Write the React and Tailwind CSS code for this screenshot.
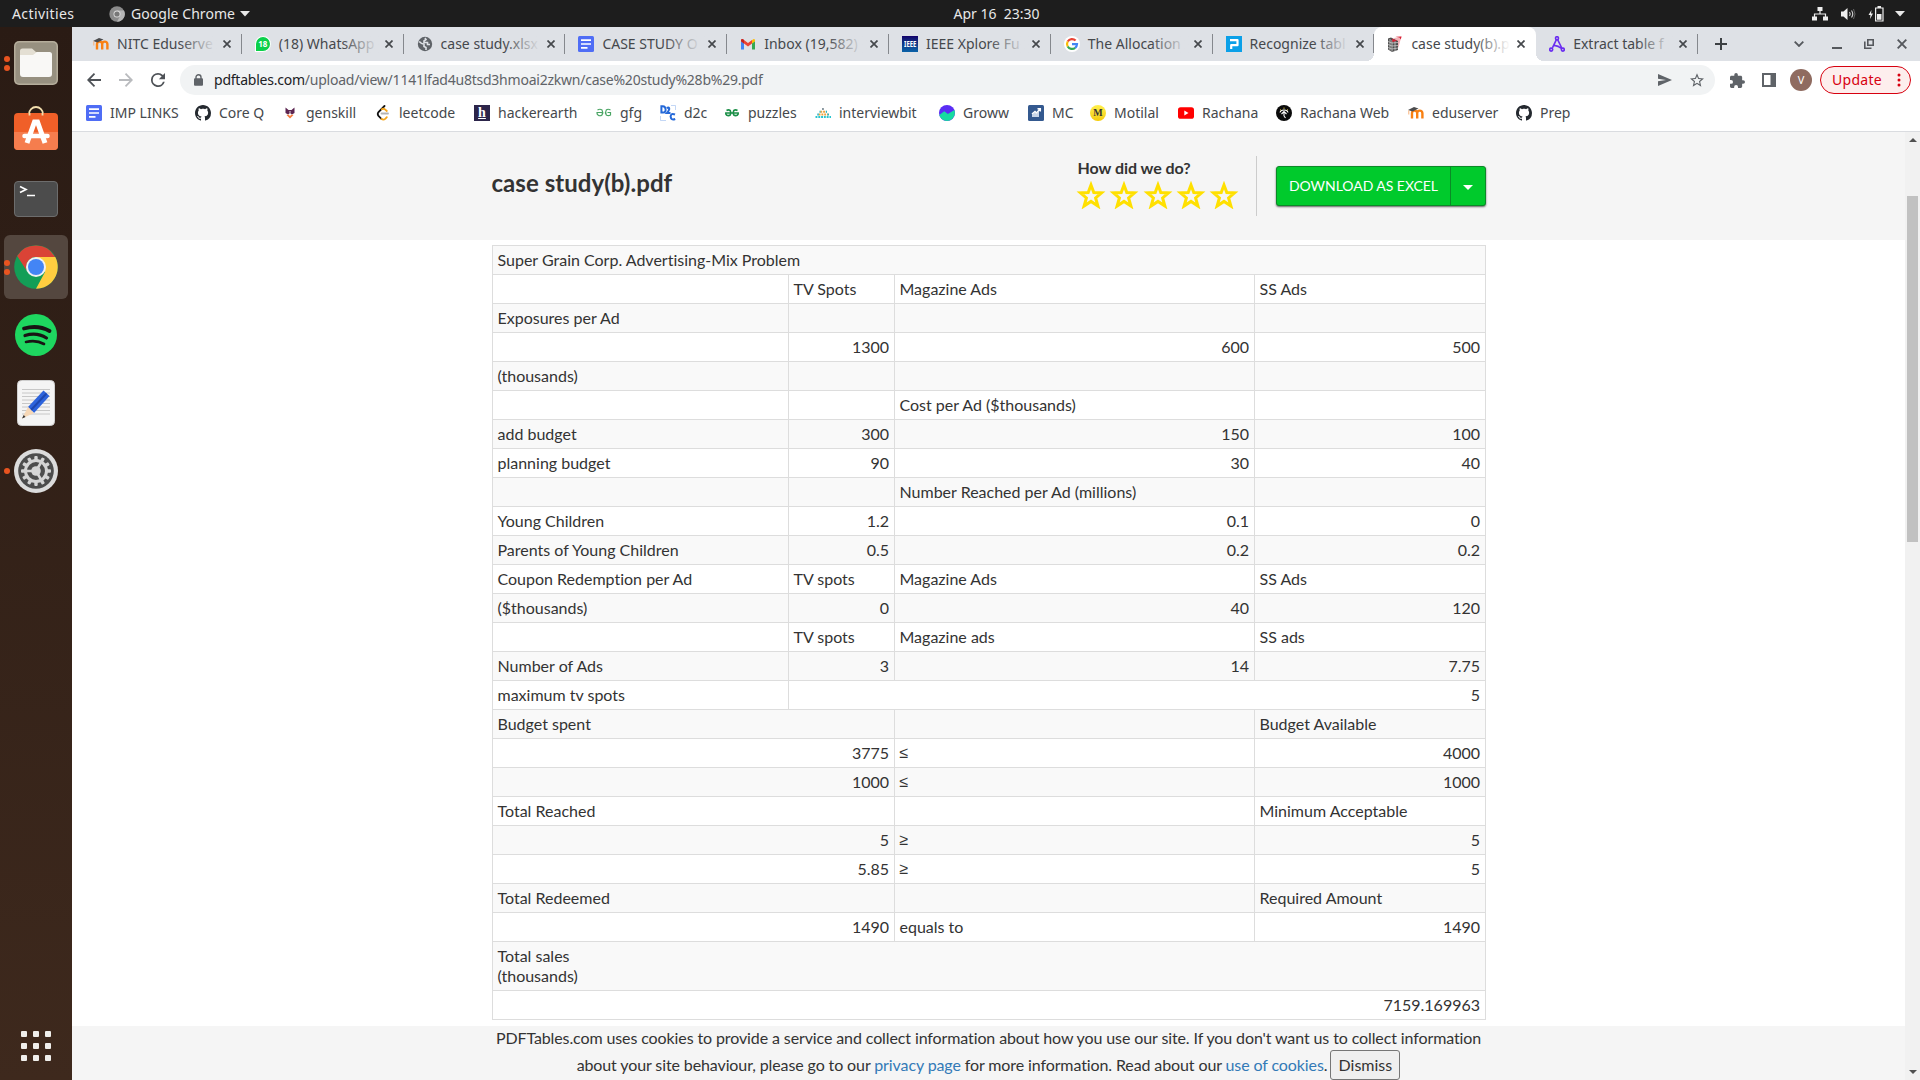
import React from "react";

const UI = "font-['Noto_Sans',sans-serif]";

function Globe() {
  return (
    <svg viewBox="0 0 16 16" className="h-4 w-4">
      <circle cx="8" cy="8" r="7.2" fill="#5f6368" />
      <path d="M2.2 5.5Q4.500 8 7 8.200V10.500L9 11.500V14M8 2L9 3.500L7 5V6.500H10.500V8.500H13" stroke="#dee1e6" strokeWidth="1.600" fill="none" />
    </svg>
  );
}

function Moodle() {
  return (
    <svg viewBox="0 0 16 16" className="h-4 w-4">
      <path d="M4 13.5V8.2a2.6 2.6 0 0 1 5.2 0v5.3M9.2 8.2a2.6 2.6 0 0 1 5.2 0v5.3" fill="none" stroke="#f98012" strokeWidth="2.4" />
      <path d="M0 5 L6 2 L10.5 3.6 L4.5 6.6 Z" fill="#4b4b4d" />
      <path d="M.8 5.4V9.5" stroke="#f9b27a" strokeWidth="1" />
    </svg>
  );
}

function Docs() {
  return (
    <svg viewBox="0 0 16 16" className="h-4 w-4">
      <rect width="16" height="16" rx="1.5" fill="#4f6df5" />
      <path d="M3 4.2H13M3 8H13M3 11.8H9.5" stroke="#fff" strokeWidth="1.7" />
    </svg>
  );
}

function Whatsapp() {
  return (
    <div className="flex h-4 w-4 items-center justify-center rounded-full rounded-bl-sm border border-white bg-[#0bd04a]">
      <span className="text-[8px] leading-none font-bold text-white">18</span>
    </div>
  );
}

function Gmail() {
  return (
    <svg viewBox="0 0 16 16" className="h-4 w-4">
      <path d="M1 4.5V13.5H4V7.3L1 5Z" fill="#4285f4" />
      <path d="M12 7.3V13.5H15V5Z" fill="#34a853" />
      <path d="M12 4.2L13.2 3.2Q15 2.2 15 4.5V5.2L12 7.5Z" fill="#fbbc04" />
      <path d="M1 5.2V4.5Q1 2.2 3 3.2L8 7L12 4.1V7.5L8 10.600 4 7.500Z" fill="#ea4335" />
      <path d="M1 5.2V4.5Q1 2.2 3 3.2L4 4V7.5Z" fill="#c5221f" />
    </svg>
  );
}

function Ieee() {
  return (
    <div className="flex h-4 w-4 items-center justify-center bg-gradient-to-b from-[#14006b] to-[#0a63a8]">
      <span className="scale-x-75 text-[8px] leading-none font-bold text-white">IEEE</span>
    </div>
  );
}

function Google() {
  return (
    <svg viewBox="0 0 16 16" className="h-4 w-4">
      <circle cx="8" cy="8" r="8" fill="#fff" />
      <g fill="none" strokeWidth="2.2">
        <path d="M11.6 4.6A5 5 0 0 0 3.7 5.5" stroke="#ea4335" />
        <path d="M3.7 5.5A5 5 0 0 0 3.7 10.5" stroke="#fbbc05" />
        <path d="M3.7 10.5A5 5 0 0 0 11.2 11.8" stroke="#34a853" />
        <path d="M11.2 11.8A5 5 0 0 0 13 8.2H8" stroke="#4285f4" />
      </g>
    </svg>
  );
}

function Pdfel() {
  return (
    <svg viewBox="0 0 16 16" className="h-4 w-4">
      <rect width="16" height="16" fill="#0ba0e8" />
      <path d="M4 4.2H11.5V9.2H5.2V13" fill="none" stroke="#fff" strokeWidth="2.2" strokeLinejoin="round" />
    </svg>
  );
}

function PdfTables() {
  return (
    <svg viewBox="0 0 16 16" className="h-4 w-4">
      <path d="M7 2L14.500 .5L11.500 11L10 13Z" fill="#f3b3b8" />
      <path d="M1 2.500L4 1.500L11 5V14L5 16L1 13.500Z" fill="#4f4f4f" />
      <path d="M1 5.500L5 7L11 6.500M1 8.500L5 10L11 9.500M1 11.500L5 13L11 12M3 3V14.500M5 4V15.500M8 5V15" stroke="#d5d5d5" strokeWidth=".7" fill="none" />
      <path d="M5 2.500L10 4.800L5.500 6ZM8.500 .8L14.500 .5L13.800 3.500L12.500 1.600Z" fill="#d81f33" />
    </svg>
  );
}

function Nodes() {
  return (
    <svg viewBox="0 0 16 16" className="h-4 w-4">
      <g fill="none" stroke="#6a2df0" strokeWidth="1.6">
        <circle cx="8" cy="2.2" r="1.5" />
        <circle cx="2.2" cy="13.6" r="1.5" />
        <circle cx="13.8" cy="13.6" r="1.5" />
        <path d="M7.4 3.7L3.4 11.8M8.6 3.7L12.8 12M5 9.8C7.5 9 10 10.5 12.5 12.5" />
      </g>
    </svg>
  );
}

function Github() {
  return (
    <svg viewBox="0 0 16 16" className="h-4 w-4">
      <path fill="#24292f" d="M8 0C3.58 0 0 3.58 0 8c0 3.54 2.29 6.53 5.47 7.59.4.07.55-.17.55-.38 0-.19-.01-.82-.01-1.49-2.01.37-2.53-.49-2.69-.94-.09-.23-.48-.94-.82-1.13-.28-.15-.68-.52-.01-.53.63-.01 1.08.58 1.23.82.72 1.21 1.87.87 2.33.66.07-.52.28-.87.51-1.07-1.78-.2-3.64-.89-3.64-3.95 0-.87.31-1.59.82-2.15-.08-.2-.36-1.02.08-2.12 0 0 .67-.21 2.2.82.64-.18 1.32-.27 2-.27s1.36.09 2 .27c1.53-1.04 2.2-.82 2.2-.82.44 1.1.16 1.92.08 2.12.51.56.82 1.27.82 2.15 0 3.07-1.87 3.75-3.65 3.95.29.25.54.73.54 1.48 0 1.07-.01 1.93-.01 2.2 0 .21.15.46.55.38A8.01 8.01 0 0 0 16 8c0-4.42-3.58-8-8-8z" />
    </svg>
  );
}

function Genskill() {
  return (
    <svg viewBox="0 0 16 16" className="h-4 w-4">
      <path d="M3.5 2.5L6.5 5H9.5L12.5 2.5V8L10 9.5L8 8L6 9.5L3.5 8Z" fill="#5b2450" />
      <path d="M7 6.500L8 8L9 6.500Z" fill="#fff" />
      <path d="M4.5 10L6.5 9.5L8 11L9.5 9.5L11.5 10L8 13.5Z" fill="#f47b3e" />
    </svg>
  );
}

function Leetcode() {
  return (
    <svg viewBox="0 0 16 16" className="h-4 w-4">
      <g fill="none" strokeLinecap="round" strokeWidth="1.8">
        <path d="M6.5 8.5H13" stroke="#b3b3b3" />
        <path d="M9.5 1L3.5 7.2Q2 9 3.5 10.8L6.500 14" stroke="#111" />
        <path d="M6.500 14Q8.5 15.4 10.5 13.6L11.8 12.2M6.8 4.2Q8.7 3.2 10.3 4.6L11.8 6" stroke="#f5a61d" />
      </g>
    </svg>
  );
}

function HackerEarth() {
  return (
    <div className="flex h-4 w-4 items-center justify-center bg-[#2c254a]">
      <span className="font-['Liberation_Serif',serif] text-[14px] leading-none font-bold text-white underline">h</span>
    </div>
  );
}

function Gfg() {
  return (
    <svg viewBox="0 0 16 16" className="h-4 w-4">
      <path d="M1.500 5Q4 3.500 6 5Q7.500 7.500 6 10Q4 11.500 2 10Q.800 9 1 7.500H7M14.500 5Q12 3.500 10.300 5Q8.700 7.500 10.300 10Q12.300 11.300 14.500 10V7.500H11.500" fill="none" stroke="#4aa564" strokeWidth="1.200" />
    </svg>
  );
}

function Puzzles() {
  return (
    <svg viewBox="0 0 16 16" className="h-4 w-4">
      <path d="M2.500 5.500Q4.500 4.300 6.200 5.500Q7.500 7.500 6.200 10Q4.500 11.300 2.500 10Q1.500 9 1.800 8H14.200Q14.500 9 13.500 10Q11.500 11.300 9.800 10Q8.500 7.500 9.800 5.500Q11.500 4.300 13.500 5.500" fill="none" stroke="#1b8f47" strokeWidth="1.600" />
    </svg>
  );
}

function D2c() {
  return (
    <svg viewBox="0 0 16 16" className="h-4 w-4">
      <g fill="none" stroke="#2468d8" strokeWidth="2">
        <path d="M1.4 1.2V7.5H3Q6 7.2 5.6 4.2Q5.3 1.4 2.8 1.2ZM6.8 3Q9.5 1.6 9.2 4.2Q9 6 7 8H10.5M15 9.5Q11 7.8 10.6 11.4Q11 15.8 15.2 14" />
      </g>
      <path d="M11 .5H15.5V5M.5 11V15.5H6" fill="none" stroke="#9bbcf0" strokeWidth=".6" />
    </svg>
  );
}

function InterviewBit() {
  return (
    <svg viewBox="0 0 16 16" className="h-4 w-4">
      <g fill="none" strokeWidth="2" strokeDasharray="1.9 .9">
        <path d="M7 4H9.5" stroke="#8a98a0" />
        <path d="M5.3 6.7H11.500" stroke="#f2a33c" />
        <path d="M3.600 9.4H13" stroke="#f2a33c" />
        <path d="M.5 12.100H16" stroke="#27c4cf" />
      </g>
      <path d="M2.300 9.400H3.800M12.500 9.400H14M4.500 6.700H5.600M10.800 6.700H12" stroke="#27b4c4" strokeWidth="2" />
    </svg>
  );
}

function Groww() {
  return (
    <svg viewBox="0 0 16 16" className="h-4 w-4">
      <circle cx="8" cy="8" r="8" fill="#5a2df4" />
      <path d="M0.3 10L5.3 6.3L8.8 9L15.400 5Q17 10.500 13.2 14Q8 17.8 3 14.2Q.8 12.4.3 10Z" fill="#15dba0" />
    </svg>
  );
}

function MoneyControl() {
  return (
    <svg viewBox="0 0 16 16" className="h-4 w-4">
      <rect width="16" height="16" rx="1.5" fill="#34598f" />
      <path d="M4 12V9.500L7 7L8.500 8.500L11 6V12Z" fill="#c9d6e8" />
      <path d="M4 9L7 6.5L8.5 8L12 4M9.5 3.8H12.3V6.5" fill="none" stroke="#fff" strokeWidth="1.5" />
    </svg>
  );
}

function Motilal() {
  return (
    <div className="flex h-4 w-4 items-center justify-center rounded-full bg-gradient-to-b from-[#fff04a] to-[#f5cb00]">
      <span className="font-['Liberation_Serif',serif] text-[10px] leading-none font-bold text-[#333]">M</span>
    </div>
  );
}

function Youtube() {
  return (
    <svg viewBox="0 0 16 16" className="h-4 w-4">
      <rect y="2.2" width="16" height="11.6" rx="2.6" fill="#f00" />
      <path d="M6.3 5.6L10.5 8L6.3 10.4Z" fill="#fff" />
    </svg>
  );
}

function RachanaWeb() {
  return (
    <svg viewBox="0 0 16 16" className="h-4 w-4">
      <circle cx="8" cy="8" r="8" fill="#0b0b0b" />
      <path d="M4 7.5Q4.5 5 8 5Q11.5 5 12 7.5M5.5 9L8 6.5L10.5 9M8 6.5V11M8 11L9.5 13" fill="none" stroke="#fff" strokeWidth="1.1" />
      <path d="M4 4.5L5 5.3M8 2.6V3.8M12 4.5L11 5.3" stroke="#e8d44d" strokeWidth="1" />
    </svg>
  );
}

const tabs = [
  { icon: <Moodle />, title: "NITC Eduserve" },
  { icon: <Whatsapp />, title: "(18) WhatsApp" },
  { icon: <Globe />, title: "case study.xlsx" },
  { icon: <Docs />, title: "CASE STUDY O" },
  { icon: <Gmail />, title: "Inbox (19,582)" },
  { icon: <Ieee />, title: "IEEE Xplore Fu" },
  { icon: <Google />, title: "The Allocation" },
  { icon: <Pdfel />, title: "Recognize tabl" },
  { icon: <PdfTables />, title: "case study(b).p", active: true },
  { icon: <Nodes />, title: "Extract table f" },
];

const bookmarks = [
  { icon: <Docs />, label: "IMP LINKS", w: "w-[109px]" },
  { icon: <Github />, label: "Core Q", w: "w-[87px]" },
  { icon: <Genskill />, label: "genskill", w: "w-[93px]" },
  { icon: <Leetcode />, label: "leetcode", w: "w-[99px]" },
  { icon: <HackerEarth />, label: "hackerearth", w: "w-[122px]" },
  { icon: <Gfg />, label: "gfg", w: "w-[64px]" },
  { icon: <D2c />, label: "d2c", w: "w-[64px]" },
  { icon: <Puzzles />, label: "puzzles", w: "w-[91px]" },
  { icon: <InterviewBit />, label: "interviewbit", w: "w-[124px]" },
  { icon: <Groww />, label: "Groww", w: "w-[89px]" },
  { icon: <MoneyControl />, label: "MC", w: "w-[62px]" },
  { icon: <Motilal />, label: "Motilal", w: "w-[88px]" },
  { icon: <Youtube />, label: "Rachana", w: "w-[98px]" },
  { icon: <RachanaWeb />, label: "Rachana Web", w: "w-[132px]" },
  { icon: <Moodle />, label: "eduserver", w: "w-[108px]" },
  { icon: <Github />, label: "Prep", w: "w-[60px]" },
];

// Each cell is [text, column span, right aligned].
const rows = [
  [["Super Grain Corp. Advertising-Mix Problem", 4]],
  [[""], ["TV Spots"], ["Magazine Ads"], ["SS Ads"]],
  [["Exposures per Ad"], [""], [""], [""]],
  [[""], ["1300", 1, true], ["600", 1, true], ["500", 1, true]],
  [["(thousands)"], [""], [""], [""]],
  [[""], [""], ["Cost per Ad ($thousands)"], [""]],
  [["add budget"], ["300", 1, true], ["150", 1, true], ["100", 1, true]],
  [["planning budget"], ["90", 1, true], ["30", 1, true], ["40", 1, true]],
  [[""], [""], ["Number Reached per Ad (millions)"], [""]],
  [["Young Children"], ["1.2", 1, true], ["0.1", 1, true], ["0", 1, true]],
  [["Parents of Young Children"], ["0.5", 1, true], ["0.2", 1, true], ["0.2", 1, true]],
  [["Coupon Redemption per Ad"], ["TV spots"], ["Magazine Ads"], ["SS Ads"]],
  [["($thousands)"], ["0", 1, true], ["40", 1, true], ["120", 1, true]],
  [[""], ["TV spots"], ["Magazine ads"], ["SS ads"]],
  [["Number of Ads"], ["3", 1, true], ["14", 1, true], ["7.75", 1, true]],
  [["maximum tv spots"], ["5", 3, true]],
  [["Budget spent", 2], [""], ["Budget Available"]],
  [["3775", 2, true], ["≤"], ["4000", 1, true]],
  [["1000", 2, true], ["≤"], ["1000", 1, true]],
  [["Total Reached", 2], [""], ["Minimum Acceptable"]],
  [["5", 2, true], ["≥"], ["5", 1, true]],
  [["5.85", 2, true], ["≥"], ["5", 1, true]],
  [["Total Redeemed", 2], [""], ["Required Amount"]],
  [["1490", 2, true], ["equals to"], ["1490", 1, true]],
  [["Total sales\n(thousands)", 4]],
  [["7159.169963", 4, true]],
];

function TopBar() {
  return (
    <header className={`${UI} grid h-[27px] shrink-0 grid-cols-3 items-center bg-[#1d1d1d] text-[14px] text-[#e8e8e8]`}>
      <div className="flex items-center pl-3">
        <span className="w-[97px] tracking-[0.4px]">Activities</span>
        <svg viewBox="0 0 16 16" className="h-4 w-4">
          <circle cx="8" cy="8" r="7.7" fill="#8b8b8b" />
          <path d="M8 4.4H15A7.7 7.7 0 0 1 8 15.7L11.2 9.8Z" fill="#b4b4b4" />
          <circle cx="8" cy="8" r="3.5" fill="#ddd" />
          <circle cx="8" cy="8" r="2.6" fill="#777" />
        </svg>
        <span className="w-[115px] pl-1.5 tracking-[0.05px] whitespace-nowrap">Google Chrome</span>
        <svg viewBox="0 0 10 6" className="h-[6px] w-[10px]"><path d="M0 0H10L5 5.5Z" fill="#e8e8e8" /></svg>
      </div>
      <div className="pl-[73px] text-center whitespace-pre">Apr 16  23:30</div>
      <div className="flex items-center justify-end pr-[15px]">
        <svg viewBox="0 0 16 14" className="mr-3 h-[14px] w-4">
          <path d="M8 3V7M2.5 11V7H13.5V11" fill="none" stroke="#eee" strokeWidth="1.2" />
          <path d="M5.5 0H10.5V4H5.5ZM0 9.5H5V13.5H0ZM11 9.5H16V13.5H11Z" fill="#eee" />
        </svg>
        <svg viewBox="0 0 16 14" className="mr-3 h-[14px] w-4">
          <path d="M1 4.5H3.5L7.5 1V13L3.5 9.5H1Z" fill="#eee" />
          <path d="M9.5 5Q11 7 9.5 9M11.5 3.5Q14 7 11.5 10.5" fill="none" stroke="#ccc" strokeWidth="1.2" />
          <path d="M13.5 2Q16.5 7 13.5 12" fill="none" stroke="#666" />
        </svg>
        <svg viewBox="0 0 16 16" className="mr-[11px] h-4 w-4">
          <path d="M3.5 4L0.5 9H2.5L2 13L5 7.5H3Z" fill="#eee" />
          <path d="M7.600 2H15V15H7.600Z" fill="none" stroke="#eee" strokeWidth="1.2" />
          <path d="M9.500 0H13V2H9.500ZM9 8H13.500V13.7H9Z" fill="#eee" />
        </svg>
        <svg viewBox="0 0 10 6" className="h-[6px] w-[10px]"><path d="M0 0H10L5 5.5Z" fill="#e8e8e8" /></svg>
      </div>
    </header>
  );
}

function DockItem({ active, dots = 0, children }) {
  return (
    <div className={`relative flex h-16 w-16 shrink-0 items-center justify-center rounded-md ${active ? "bg-[#54473f]" : ""}`}>
      {dots > 0 && (
        <div className="absolute left-0 flex flex-col gap-[3px]">
          <span className="h-1.5 w-1.5 rounded-full bg-[#e95420]" />
          {dots > 1 && <span className="h-1.5 w-1.5 rounded-full bg-[#e95420]" />}
        </div>
      )}
      {children}
    </div>
  );
}

function Dock() {
  const teeth = Array.from({ length: 12 }, (_, i) => i * 30);
  return (
    <aside className="flex w-[72px] shrink-0 flex-col items-center gap-1 bg-gradient-to-b from-[#2a1b14] to-[#3e291d] pt-1">
      <DockItem dots={2}>
        <svg viewBox="0 0 44 44" className="h-11 w-11">
          <rect width="44" height="44" rx="5" fill="#b5ad9b" />
          <rect x="1.5" y="1.5" width="41" height="41" rx="4" fill="#979080" />
          <path d="M6 10Q6 7.5 8.5 7.5H18L22 11H36V20H6Z" fill="#e4dfd3" />
          <path d="M6 14H19L23 11H35.5Q38 11 38 13.5V33Q38 36 35 36H9Q6 36 6 33Z" fill="#f9f8f6" />
        </svg>
      </DockItem>
      <DockItem>
        <svg viewBox="0 0 44 44" className="mb-1.5 h-11 w-11">
          <path d="M15 9V8A7 7 0 0 1 29 8V9" fill="none" stroke="#f3dfae" strokeWidth="1.8" />
          <rect y="7" width="44" height="37" rx="4" fill="#f05f28" />
          <path d="M0 26H44V40Q44 44 40 44H4Q0 44 0 40Z" fill="#f57d4e" />
          <path d="M15.500 7V9.500M28.500 7V9.500" stroke="#f3dfae" strokeWidth="1.8" />
          <path d="M13 37L20.500 16H23.500L31 37" fill="none" stroke="#fff" strokeWidth="5" />
          <path d="M10.5 30H33.5" stroke="#fff" strokeWidth="4.5" strokeLinecap="round" />
        </svg>
      </DockItem>
      <DockItem>
        <svg viewBox="0 0 44 36" className="h-9 w-11">
          <rect x=".5" y=".5" width="43" height="35" rx="3.5" fill="#4c4c4c" stroke="#6d6d6d" />
          <path d="M6 5.5L12 8.5L6 11.5M13 14.5H21" fill="none" stroke="#fff" strokeWidth="1.7" />
        </svg>
      </DockItem>
      <DockItem active dots={2}>
        <svg viewBox="0 0 44 44" className="h-11 w-11">
          <circle cx="22" cy="22" r="21.8" fill="#139e57" />
          <path d="M3.2 11A21.8 21.8 0 0 1 41 12H22A10 10 0 0 0 13.5 27Z" fill="#da4336" />
          <path d="M22 12H41.3A21.8 21.8 0 0 1 22 43.8L31 27Z" fill="#ffcd40" />
          <circle cx="22" cy="22" r="10" fill="#f1f1f1" />
          <circle cx="22" cy="22" r="8" fill="#4385f5" />
        </svg>
      </DockItem>
      <DockItem>
        <svg viewBox="0 0 42 42" className="h-[42px] w-[42px]">
          <circle cx="21" cy="21" r="21" fill="#1ed760" />
          <g fill="none" stroke="#191414" strokeLinecap="round">
            <path d="M9 14.5Q23 10.5 34.5 17" strokeWidth="3.8" />
            <path d="M10 21.5Q22 18 31.5 24" strokeWidth="3.2" />
            <path d="M11 28Q21 25.5 29 30" strokeWidth="2.6" />
          </g>
        </svg>
      </DockItem>
      <DockItem>
        <svg viewBox="0 0 38 46" className="h-[46px] w-[38px]">
          <rect x=".5" y=".5" width="37" height="45" rx="4" fill="#f4f4f4" stroke="#cfcfcf" />
          <path d="M5 9.5H33M5 13H33M5 16.500H33M5 20H33M5 23.500H33M5 27H33M5 30.500H33M5 34H33" stroke="#c2c2c2" strokeWidth=".9" />
          <path d="M26.500 10.500L32.500 16L17 33L11 27Z" fill="#2c63dc" />
          <path d="M29.500 13.500L14 30" stroke="#1d47ae" strokeWidth="2" />
          <path d="M11 27L17 33L5 38.500Z" fill="#f6d7b6" />
          <path d="M6.700 35L8.500 37L5 38.500Z" fill="#333" />
        </svg>
      </DockItem>
      <DockItem dots={1}>
        <svg viewBox="0 0 44 44" className="h-11 w-11">
          <circle cx="22" cy="22" r="22" fill="#dcdcdc" />
          <circle cx="22" cy="22" r="17.800" fill="#4d4d4d" />
          {teeth.map((a) => (
            <rect key={a} x="20.300" y="7" width="3.400" height="5" rx="1" fill="#d5d5d5" transform={`rotate(${a} 22 22)`} />
          ))}
          <circle cx="22" cy="22" r="10.500" fill="none" stroke="#d5d5d5" strokeWidth="3" />
          <path d="M22 22L12 22M22 22L27 13.500M22 22L27 30.500" stroke="#d5d5d5" strokeWidth="2.500" />
          <circle cx="22" cy="22" r="4.800" fill="#d5d5d5" />
        </svg>
      </DockItem>
      <div className="mt-auto mb-[19px] grid grid-cols-3 gap-1.5">
        {Array.from({ length: 9 }, (_, i) => (
          <span key={i} className="h-1.5 w-1.5 rounded-[1px] bg-[#f0efec]" />
        ))}
      </div>
    </aside>
  );
}

function Tab({ icon, title, active }) {
  const fade = active ? "to-white" : "to-[#dee1e6]";
  return (
    <div className={`flex h-full w-[161.8px] shrink-0 items-center pl-[13px] ${active ? "relative rounded-t-lg bg-white" : ""}`}>
      {active && (
        <>
          <span className="absolute bottom-0 -left-2 h-2 w-2 bg-[radial-gradient(circle_at_0_0,#dee1e6_8px,white_8px)]" />
          <span className="absolute -right-2 bottom-0 h-2 w-2 bg-[radial-gradient(circle_at_100%_0,#dee1e6_8px,white_8px)]" />
        </>
      )}
      {icon}
      <div className="relative ml-2 w-[99px] pb-0.5 whitespace-nowrap">
        {title}
        <span className={`absolute inset-y-0 -right-1 w-10 bg-gradient-to-r from-transparent to-90% ${fade}`} />
      </div>
      <svg viewBox="0 0 8 8" className="relative ml-[7px] h-2 w-2"><path d="M.5 .5L7.500 7.500M7.500 .5L.5 7.500" stroke="#45484c" strokeWidth="1.700" /></svg>
      {!active && <span className="ml-auto h-5 w-px bg-[#85888d]" />}
    </div>
  );
}

function TabStrip() {
  return (
    <div className={`${UI} flex h-[34px] shrink-0 items-center bg-[#dee1e6] pl-2 text-[14px] text-[#45484c]`}>
      {tabs.map((t) => <Tab key={t.title} {...t} />)}
      <svg viewBox="0 0 12 12" className="ml-[17px] h-3 w-3"><path d="M6 0V12M0 6H12" stroke="#3c4043" strokeWidth="2" /></svg>
      <div className="ml-auto flex items-center pr-[13px]">
        <svg viewBox="0 0 10 6" className="mr-7 h-[6px] w-[10px]"><path d="M.7 .7L5 5L9.300 .7" fill="none" stroke="#55585d" strokeWidth="1.800" /></svg>
        <span className="mt-2 mr-[22px] h-0.5 w-[10px] bg-[#55585d]" />
        <svg viewBox="0 0 10 10" className="mr-[23px] h-[10px] w-[10px]"><path d="M3.800 .8H9.200V6.200H3.800ZM.8 2.500V9.200H7.500" fill="none" stroke="#55585d" strokeWidth="1.600" /></svg>
        <svg viewBox="0 0 10 10" className="h-[10px] w-[10px]"><path d="M.7 .7L9.300 9.300M9.300 .7L.7 9.300" stroke="#55585d" strokeWidth="1.900" /></svg>
      </div>
    </div>
  );
}

function Toolbar() {
  return (
    <div className={`${UI} flex h-[38px] shrink-0 items-center bg-white pl-[15px]`}>
      <svg viewBox="0 0 14 14" className="h-[14px] w-[14px]"><path d="M14 7H1.500M7.500 .7L1.200 7L7.500 13.300" fill="none" stroke="#4e5257" strokeWidth="1.800" /></svg>
      <svg viewBox="0 0 14 14" className="ml-[18px] h-[14px] w-[14px]"><path d="M0 7H12.500M6.500 .7L12.800 7L6.500 13.300" fill="none" stroke="#b9bbbe" strokeWidth="1.800" /></svg>
      <svg viewBox="4 4 16 16" className="ml-[18px] h-[14px] w-[14px]"><path fill="#4e5257" d="M17.650 6.350A7.960 7.960 0 0 0 12 4a8 8 0 1 0 7.730 10h-2.080A6 6 0 1 1 12 6c1.660 0 3.140.69 4.220 1.780L13 11h7V4z" /></svg>
      <div className="ml-[15px] flex h-[30px] w-[1535px] items-center rounded-full bg-[#f1f3f4] pr-[11px] pl-3.5">
        <svg viewBox="0 0 9 12" className="h-3 w-[9px]"><path d="M2 5V3.200A2.500 2.500 0 0 1 7 3.200V5" fill="none" stroke="#5f6368" strokeWidth="1.400" /><rect y="4.300" width="9" height="7.500" rx="1" fill="#5f6368" /></svg>
        <span className="ml-[11px] pb-px text-[14px] tracking-[-0.23px] text-[#5f6368]"><span className="text-[#202124]">pdftables.com</span>/upload/view/1141lfad4u8tsd3hmoai2zkwn/case%20study%28b%29.pdf</span>
        <svg viewBox="2 3 21 18" className="ml-auto h-[12px] w-[14px]"><path fill="#5f6368" d="M2 21L23 12L2 3V10L14 12L2 14Z" /></svg>
        <svg viewBox="2 2 20 19" className="ml-[18px] h-[14px] w-[14px]"><path fill="#5f6368" d="M22 9.240l-7.190-.62L12 2 9.190 8.630 2 9.240l5.460 4.730L5.820 21 12 17.270 18.180 21l-1.630-7.030L22 9.240zM12 15.400l-3.760 2.270 1-4.280-3.320-2.880 4.380-.38L12 6.100l1.710 4.040 4.380.38-3.320 2.880 1 4.280L12 15.400z" /></svg>
      </div>
      <svg viewBox="2 1 21 21" className="ml-[15px] h-[15px] w-[15px]"><path fill="#5f6368" d="M20.500 11H19V7c0-1.100-.9-2-2-2h-4V3.500a2.500 2.500 0 0 0-5 0V5H4c-1.100 0-2 .9-2 2v3.800h1.500a2.700 2.700 0 0 1 0 5.400H2V20c0 1.100.9 2 2 2h3.800v-1.500a2.700 2.700 0 0 1 5.400 0V22H17c1.100 0 2-.9 2-2v-4h1.500a2.500 2.500 0 0 0 0-5z" /></svg>
      <svg viewBox="0 0 14 14" className="ml-[17px] h-[14px] w-[14px]"><path d="M1 1H13V13H1Z" fill="none" stroke="#5f6368" strokeWidth="2" /><rect x="8.500" y="1" width="5" height="12" fill="#5f6368" /></svg>
      <span className="ml-[14px] flex h-[22px] w-[22px] items-center justify-center rounded-full bg-[#8f6b60] text-[11px] text-white">V</span>
      <div className="ml-2 flex h-7 w-[91px] items-center rounded-full border border-[#d7000f] bg-[#fdeeed] pl-[11px] text-[14px] text-[#d7000f]">
        <span className="w-[65px] pb-px tracking-[0.3px]">Update</span>
        <svg viewBox="0 0 4 14" className="h-[14px] w-1"><circle cx="2" cy="2" r="1.500" fill="#d7000f" /><circle cx="2" cy="7" r="1.500" fill="#d7000f" /><circle cx="2" cy="12" r="1.500" fill="#d7000f" /></svg>
      </div>
    </div>
  );
}

function BookmarkBar() {
  return (
    <div className={`${UI} flex h-[33px] shrink-0 items-center border-b border-[#dadce0] bg-white pb-[5px] pl-[14px] text-[14px] text-[#45484c]`}>
      {bookmarks.map((b) => (
        <div key={b.label} className={`flex shrink-0 items-center gap-2 whitespace-nowrap ${b.w}`}>
          {b.icon}
          <span>{b.label}</span>
        </div>
      ))}
    </div>
  );
}

function PageHeader() {
  return (
    <div className="flex h-[108px] shrink-0 bg-[#f5f5f5] pl-[419.5px]">
      <div className="flex w-[994.5px]">
        <h1 className="mt-[33px] text-[24px] leading-9 font-bold tracking-[0.05px]">case study(b).pdf</h1>
        <div className="mt-6 ml-auto h-[60px] w-[181px] border-r border-[#ccc]">
          <div className="pl-[1.5px] leading-[23px] font-bold tracking-[-0.04px]">How did we do?</div>
          <div className="mt-0.5 flex gap-[3.2px] pl-[0.3px]">
            {[1, 2, 3, 4, 5].map((n) => (
              <svg key={n} viewBox="0 0 30 28" className="h-[28px] w-[30px]">
                <path d="M15 4L17.800 11.600L25.500 11.900L19.600 16.900L21.900 25L15 20.400L8.100 25L10.400 16.900L4.500 11.900L12.200 11.600Z" fill="none" stroke="#ffe000" strokeWidth="3" />
              </svg>
            ))}
          </div>
        </div>
        <div className="mt-[34px] ml-[19px] flex h-10 w-[210px] rounded-[3px] border border-[#0b8a27] bg-[#00ca2c] text-white shadow-[0_1px_2px_rgba(0,0,0,0.6)]">
          <span className="flex w-[174px] items-center justify-center border-r border-[#0b8a27] pb-px text-[14px] leading-none tracking-[-0.05px]">DOWNLOAD AS EXCEL</span>
          <span className="flex flex-1 items-center justify-center">
            <svg viewBox="0 0 10 5" className="mt-0.5 h-[5px] w-[10px]"><path d="M0 0H10L5 5Z" fill="#fff" /></svg>
          </span>
        </div>
      </div>
    </div>
  );
}

function DataTable() {
  return (
    <table className="mt-[5px] ml-[420px] w-[994px] table-fixed border-collapse leading-5 [font-variant-ligatures:none]">
      <colgroup>
        <col className="w-[296px]" />
        <col className="w-[106px]" />
        <col className="w-[360px]" />
        <col className="w-[231px]" />
      </colgroup>
      <tbody>
        {rows.map((cells, r) => (
          <tr key={r} className="h-[29px] odd:bg-[#f9f9f9]">
            {cells.map(([text, span = 1, right], c) => (
              <td
                key={c}
                colSpan={span}
                className={`border border-[#ddd] py-1 pr-[5px] pl-[4.5px] whitespace-pre-line ${right ? "text-right" : ""} ${text === "≤" || text === "≥" ? "font-['Liberation_Sans',sans-serif]" : ""}`}
              >
                {text}
              </td>
            ))}
          </tr>
        ))}
      </tbody>
    </table>
  );
}

function CookieNotice() {
  return (
    <div className="mt-auto h-[54px] shrink-0 bg-[#f5f5f5] text-center tracking-[-0.11px]">
      <p className="h-6 leading-6">PDFTables.com uses cookies to provide a service and collect information about how you use our site. If you don't want us to collect information</p>
      <p className="flex h-[30px] items-center justify-center whitespace-pre">
        <span className="pb-px">
          about your site behaviour, please go to our <a className="text-[#337ab7]">privacy page</a> for more information. Read about our <a className="text-[#337ab7]">use of cookies</a>.
        </span>
        <button className="ml-[3px] h-[30px] w-[70px] rounded-[3px] border border-[#767676] bg-[#efefef] tracking-normal">Dismiss</button>
      </p>
    </div>
  );
}

export default function App() {
  return (
    <div className="flex h-[1080px] w-[1920px] flex-col overflow-hidden bg-white">
      <TopBar />
      <div className="flex min-h-0 flex-1">
        <Dock />
        <main className="flex min-w-0 flex-1 flex-col">
          <TabStrip />
          <Toolbar />
          <BookmarkBar />
          <div className="flex min-h-0 flex-1">
            <div className="flex flex-1 flex-col font-['Lato',sans-serif] text-[16px] text-[#333]">
              <PageHeader />
              <DataTable />
              <CookieNotice />
            </div>
            <div className="flex w-[15px] flex-col items-center bg-[#f1f1f1] py-1.5">
              <svg viewBox="0 0 8 4" className="h-1 w-2"><path d="M0 4H8L4 0Z" fill="#505050" /></svg>
              <div className="mt-[54px] h-[346px] w-[11px] bg-[#c1c1c1]" />
              <svg viewBox="0 0 8 4" className="mt-auto h-1 w-2"><path d="M0 0H8L4 4Z" fill="#505050" /></svg>
            </div>
          </div>
        </main>
      </div>
    </div>
  );
}
